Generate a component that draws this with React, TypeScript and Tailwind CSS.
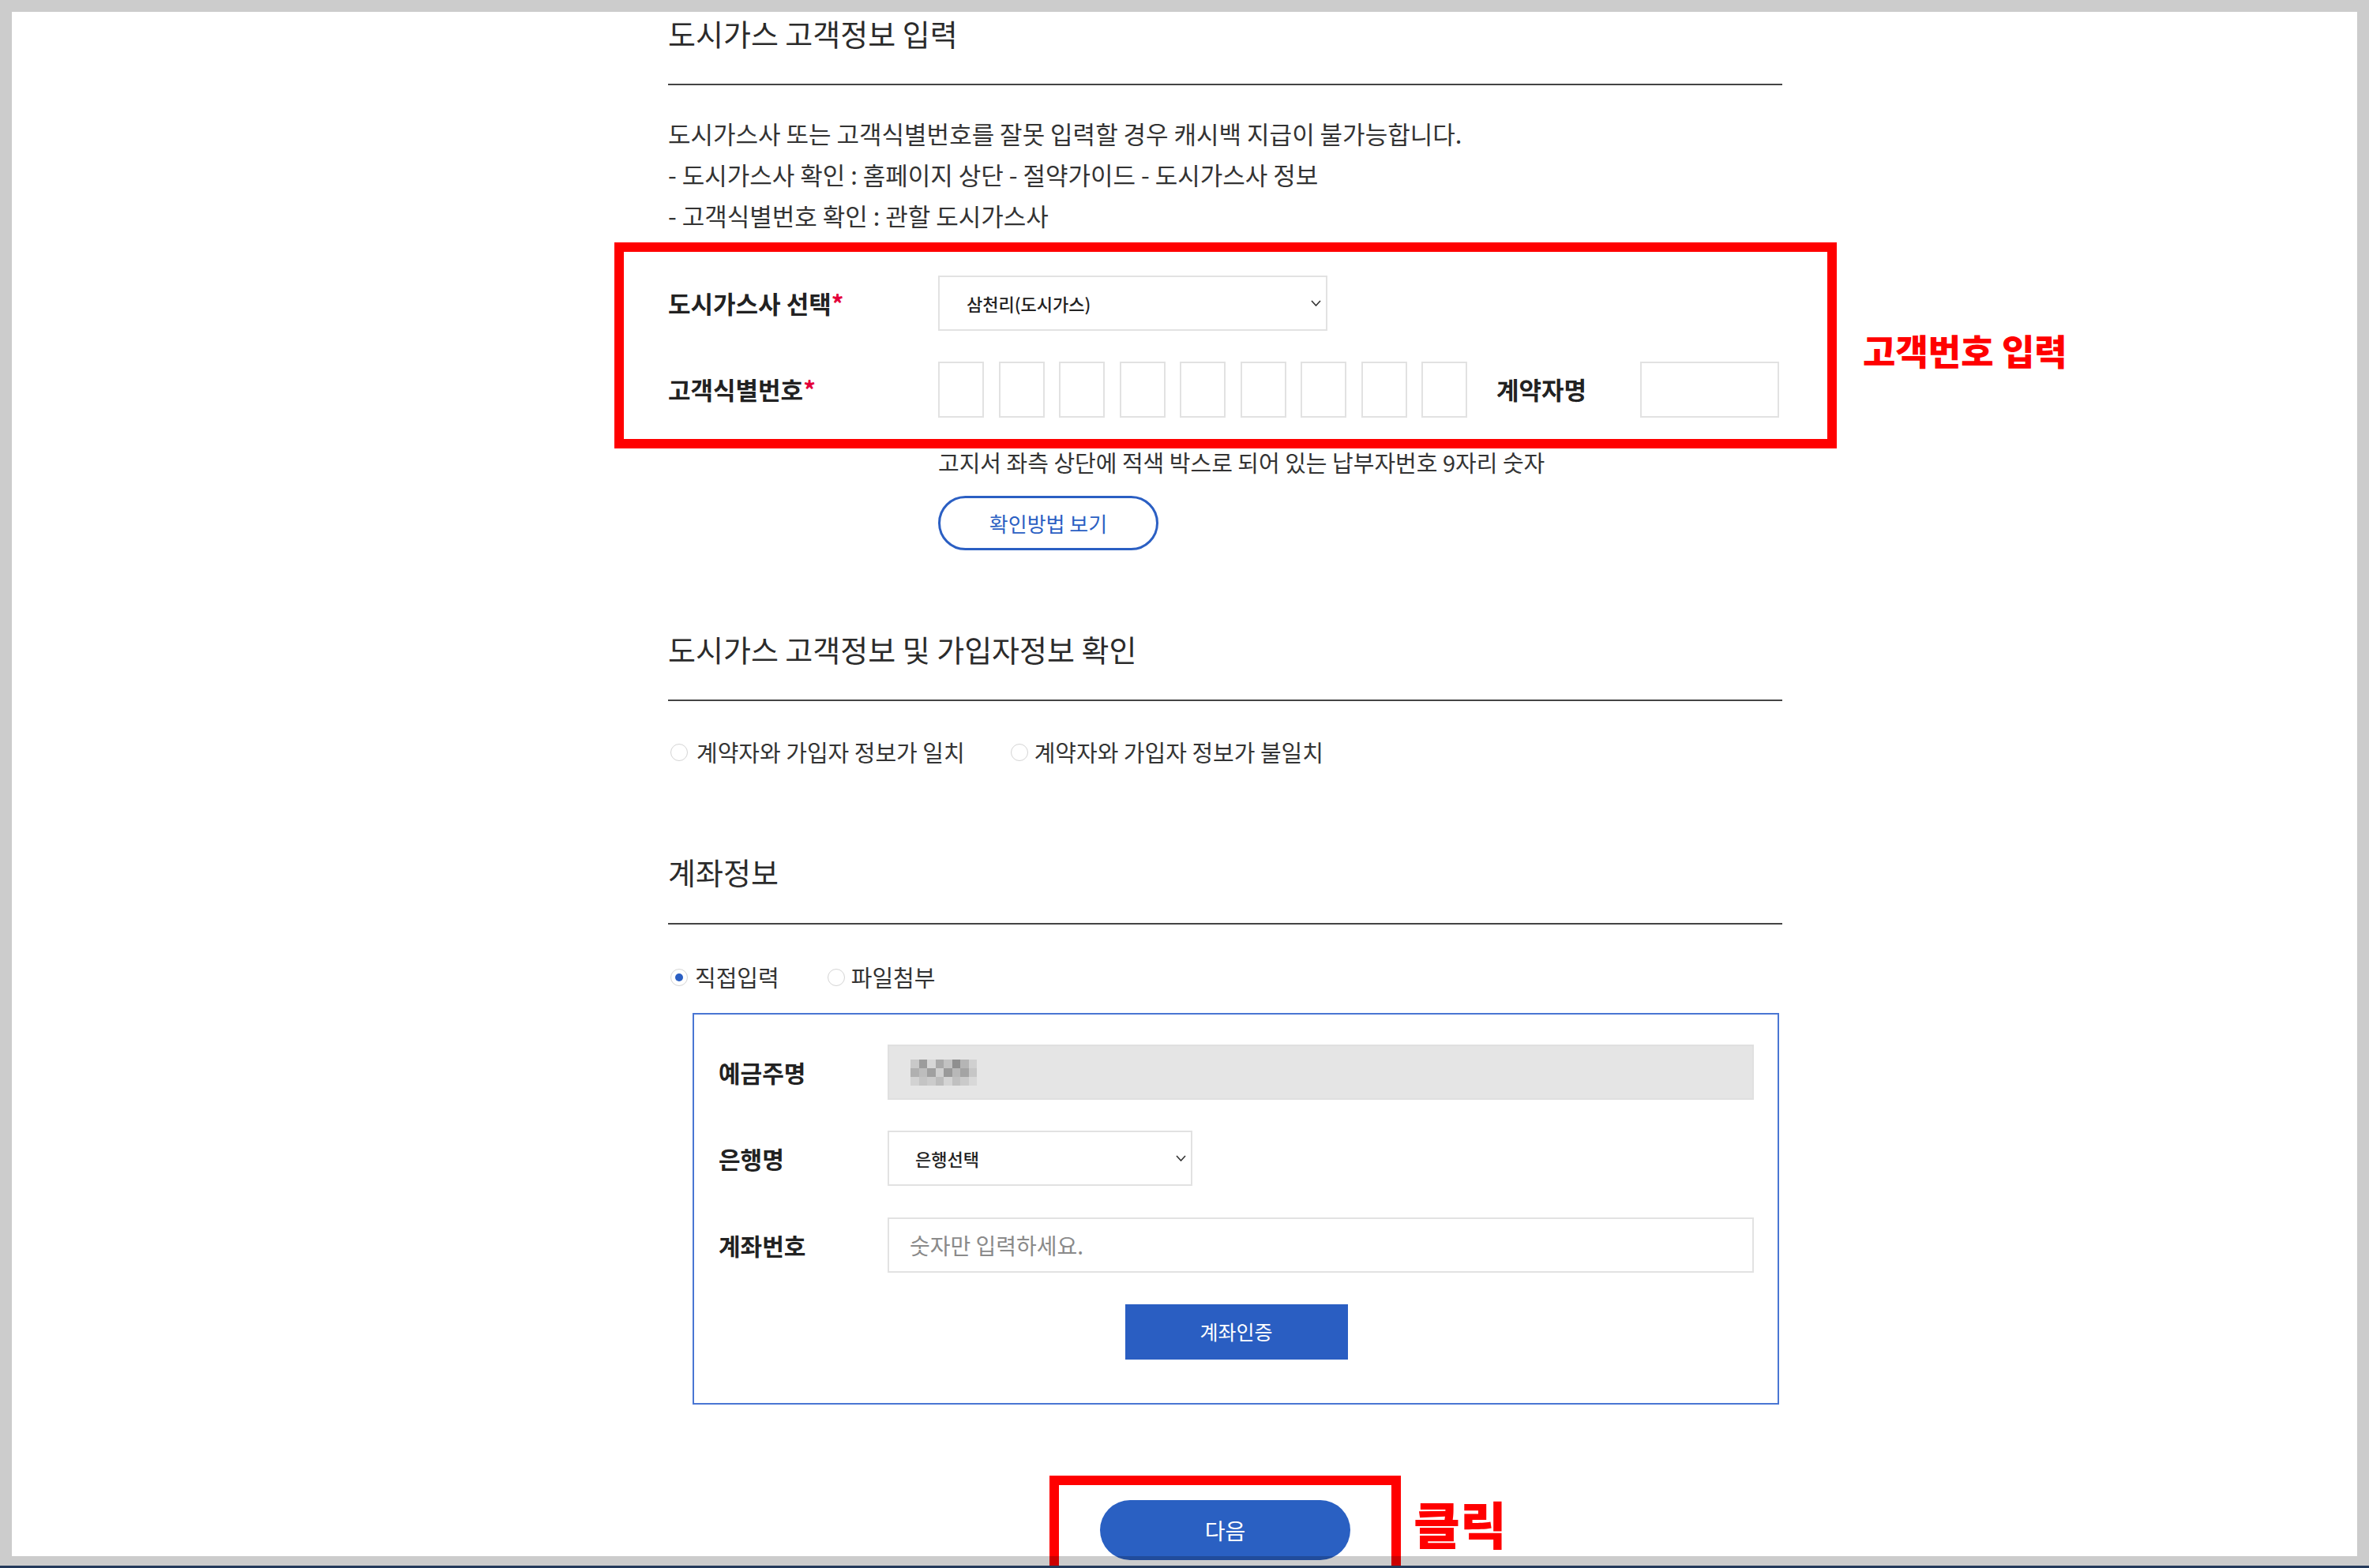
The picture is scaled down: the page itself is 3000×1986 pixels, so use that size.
import React from "react";

const Chevron = () => (
  <svg width="13" height="8" viewBox="0 0 13 8" fill="none">
    <polyline points="1,1 6.5,7 12,1" stroke="#333" strokeWidth="1.6" />
  </svg>
);

const Radio = ({ checked = false }: { checked?: boolean }) => (
  <span className="flex h-[22px] w-[22px] shrink-0 items-center justify-center rounded-full border border-[#d4d4d4] bg-white">
    {checked && <span className="h-[10px] w-[10px] rounded-full bg-[#2b5fc3]" />}
  </span>
);

const mosaic = [
  "#c9c9c9", "#9c9c9c", "#d6d6d6", "#a9a9a9", "#c2c2c2", "#8f8f8f", "#b5b5b5", "#d0d0d0",
  "#b0b0b0", "#bdbdbd", "#a0a0a0", "#cfcfcf", "#9a9a9a", "#b8b8b8", "#a4a4a4", "#c6c6c6",
  "#d2d2d2", "#c4c4c4", "#cbcbcb", "#bcbcbc", "#d4d4d4", "#c0c0c0", "#cacaca", "#d8d8d8",
];

export default function App() {
  return (
    <div className="relative h-[1986px] w-[3000px] overflow-hidden bg-white font-['Noto_Sans_CJK_KR','Noto_Sans',sans-serif] text-[#333]">
      <div className="ml-[846px] w-[1411px]">
        {/* 도시가스 고객정보 입력 */}
        <h2 className="border-b-2 border-[#444] pt-[15px] pb-[37px] text-[38px] font-normal leading-[54px] text-[#2b2b2b]">
          도시가스 고객정보 입력
        </h2>
        <div className="mt-[35px] text-[31px] leading-[52px] text-[#333]">
          <p>도시가스사 또는 고객식별번호를 잘못 입력할 경우 캐시백 지급이 불가능합니다.</p>
          <p>- 도시가스사 확인 : 홈페이지 상단 - 절약가이드 - 도시가스사 정보</p>
          <p>- 고객식별번호 확인 : 관할 도시가스사</p>
        </div>

        <div className="relative mt-[8px] -ml-[68px] -mr-[69px] border-[12px] border-[#ff0000] pt-[30px] pr-[57px] pb-[27px] pl-[56px]">
          <div className="flex h-[70px] items-center">
            <span className="w-[342px] text-[31px] font-bold text-[#222]">
              도시가스사 선택<span className="text-[#e4003a]">*</span>
            </span>
            <div className="flex h-[70px] w-[493px] items-center justify-between border-2 border-[#e2e2e2] pl-[34px] pr-[6px]">
              <span className="text-[22px] font-medium text-[#222]">삼천리(도시가스)</span>
              <Chevron />
            </div>
          </div>
          <div className="mt-[39px] flex h-[71px] items-center">
            <span className="w-[342px] text-[31px] font-bold text-[#222]">
              고객식별번호<span className="text-[#e4003a]">*</span>
            </span>
            <div className="flex gap-[18.5px]">
              {Array.from({ length: 9 }).map((_, i) => (
                <div key={i} className="h-[71px] w-[58px] border-2 border-[#e2e2e2]" />
              ))}
            </div>
            <span className="ml-[37px] w-[182px] text-[31px] font-bold text-[#222]">계약자명</span>
            <div className="h-[71px] w-[176px] border-2 border-[#e2e2e2]" />
          </div>
          <span className="absolute top-[102px] left-[calc(100%+45px)] whitespace-nowrap text-[45px] font-black leading-none text-[#ff0000]">
            고객번호 입력
          </span>
        </div>

        <p className="pl-[342px] text-[29px] leading-[34px] text-[#333]">
          고지서 좌측 상단에 적색 박스로 되어 있는 납부자번호 9자리 숫자
        </p>
        <button className="mt-[26px] ml-[342px] flex h-[69px] w-[279px] items-center justify-center rounded-full border-[3px] border-[#2b5fc3] text-[26px] text-[#2b5fc3]">
          확인방법 보기
        </button>

        {/* 도시가스 고객정보 및 가입자정보 확인 */}
        <h2 className="mt-[98px] border-b-2 border-[#444] pb-[37px] text-[38px] font-normal leading-[54px] text-[#2b2b2b]">
          도시가스 고객정보 및 가입자정보 확인
        </h2>
        <div className="mt-[45px] flex h-[40px] items-center pl-[3px] text-[29px] text-[#333]">
          <label className="flex items-center gap-[11px]">
            <Radio />
            계약자와 가입자 정보가 일치
          </label>
          <label className="ml-[58px] flex items-center gap-[8px]">
            <Radio />
            계약자와 가입자 정보가 불일치
          </label>
        </div>

        {/* 계좌정보 */}
        <h2 className="mt-[104px] border-b-2 border-[#444] pb-[38px] text-[38px] font-normal leading-[54px] text-[#2b2b2b]">
          계좌정보
        </h2>
        <div className="mt-[47px] flex h-[40px] items-center pl-[3px] text-[29px] text-[#333]">
          <label className="flex items-center gap-[9px]">
            <Radio checked />
            직접입력
          </label>
          <label className="ml-[61px] flex items-center gap-[8px]">
            <Radio />
            파일첨부
          </label>
        </div>

        <div className="mt-[25px] ml-[31px] w-[1376px] border-2 border-[#4a76d3] pt-[38px] pr-[30px] pb-[55px] pl-[31px]">
          <div className="flex h-[70px] items-center">
            <span className="w-[214px] text-[30px] font-bold text-[#222]">예금주명</span>
            <div className="flex h-[70px] w-[1097px] items-center border-2 border-[#e0e0e0] bg-[#e5e5e5] pl-[27px]">
              <div className="grid grid-cols-8">
                {mosaic.map((c, i) => (
                  <span key={i} className="h-[11px] w-[10.5px]" style={{ backgroundColor: c }} />
                ))}
              </div>
            </div>
          </div>
          <div className="mt-[39px] flex h-[70px] items-center">
            <span className="w-[214px] text-[30px] font-bold text-[#222]">은행명</span>
            <div className="flex h-[70px] w-[386px] items-center justify-between border-2 border-[#e2e2e2] pl-[33px] pr-[6px]">
              <span className="text-[22px] font-medium text-[#222]">은행선택</span>
              <Chevron />
            </div>
          </div>
          <div className="mt-[40px] flex h-[70px] items-center">
            <span className="w-[214px] text-[30px] font-bold text-[#222]">계좌번호</span>
            <div className="flex h-[70px] w-[1097px] items-center border-2 border-[#e2e2e2] pl-[26px]">
              <span className="text-[28px] text-[#8a8a8a]">숫자만 입력하세요.</span>
            </div>
          </div>
          <div className="mt-[40px] flex justify-center">
            <button className="h-[70px] w-[282px] bg-[#2a5ec2] text-[25px] text-white">계좌인증</button>
          </div>
        </div>

        {/* 다음 */}
        <div className="relative mx-auto mt-[90px] h-[130px] w-[445px] border-[12px] border-[#ff0000] pt-[19px]">
          <button className="mx-auto flex h-[76px] w-[317px] items-center justify-center rounded-full bg-[#2a60c2] text-[28px] text-white">
            다음
          </button>
          <span className="absolute top-[15px] left-[calc(100%+28px)] whitespace-nowrap text-[64px] font-black leading-none text-[#ff0000]">
            클릭
          </span>
        </div>
      </div>

      {/* dimmed frame */}
      <div className="pointer-events-none absolute inset-0 border-[15px] border-black/20" />
      <div className="pointer-events-none absolute right-0 bottom-0 left-0 h-[3px] bg-[#243a5b]" />
    </div>
  );
}
